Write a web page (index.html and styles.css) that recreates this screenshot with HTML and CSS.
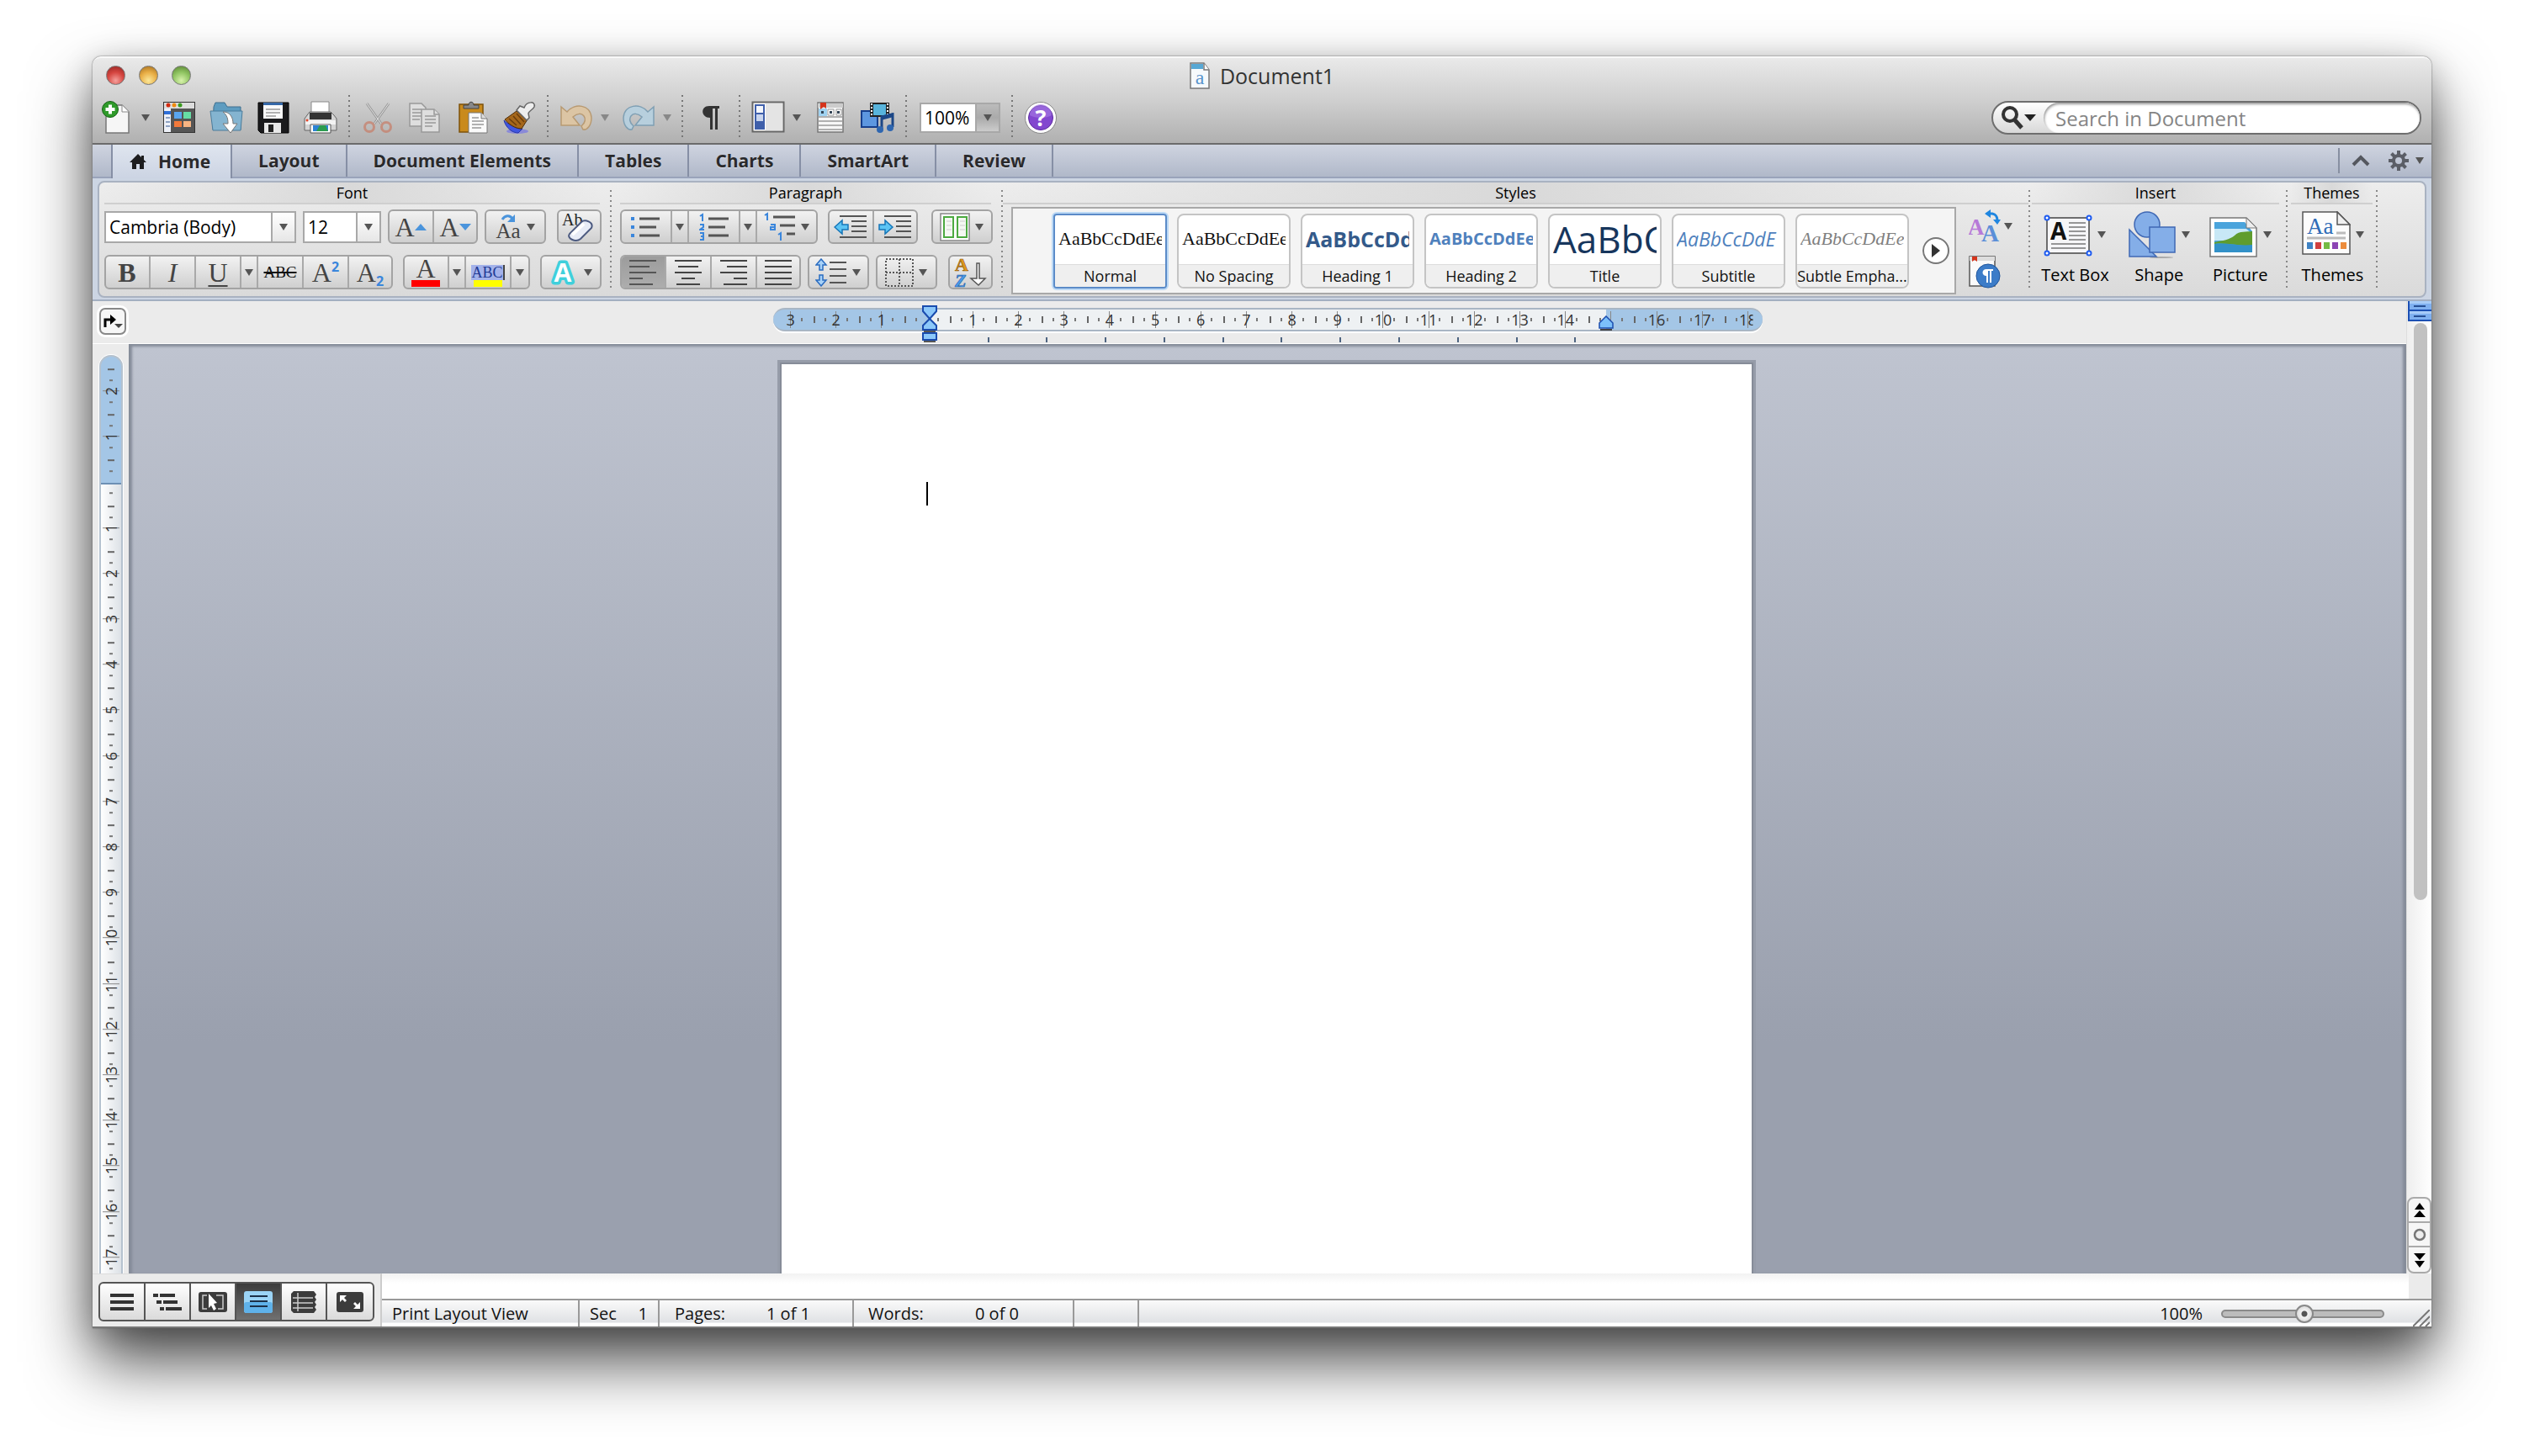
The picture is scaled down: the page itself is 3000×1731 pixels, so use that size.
FILE: index.html
```html
<!DOCTYPE html>
<html lang="en">
<head>
<meta charset="utf-8">
<title>Document1</title>
<link rel="stylesheet" href="styles.css">
</head>
<body>
<main class="window">
  <header class="chrome">
    <div class="titlebar">
      <div class="lights">
        <button class="light red" aria-label="Close"></button>
        <button class="light amber" aria-label="Minimize"></button>
        <button class="light green" aria-label="Zoom"></button>
      </div>
      <h1 class="title">
        <svg width="24" height="32" viewBox="0 0 24 32"><path d="M1 1h16l6 8v22H1z" fill="#f6fafc" stroke="#777" stroke-width="1.500"/><path d="M2 2h14v6H2z" fill="#58a8d4"/><path d="M17 1v8h6" fill="#fff" stroke="#777" stroke-width="1.500"/><text x="12" y="26" text-anchor="middle" font-size="24" font-family="Liberation Serif, serif" fill="#5a94cc">a</text></svg>
        Document1
      </h1>
    </div>
    <div class="toolbar">
      <button class="tool" aria-label="New"><svg width="40" height="40" viewBox="0 0 40 40"><path d="M7 5h19l8 8v25H7z" fill="#f6f6f6" stroke="#777" stroke-width="1.5"/><path d="M26 5v8h8" fill="#fff" stroke="#888"/><circle cx="12" cy="10" r="9.500" fill="#2f9a2a" stroke="#176316"/><path d="M12 4.500v11M6.500 10h11" stroke="#fff" stroke-width="4"/></svg></button>
      <button class="drop" aria-label="New options"><i class="tri"></i></button>
      <button class="tool" aria-label="Gallery"><svg width="40" height="40" viewBox="0 0 40 40"><rect x="1.500" y="1.500" width="37" height="36" fill="#555" stroke="#333"/><rect x="2" y="2" width="36" height="7" fill="#ddd"/><circle cx="7" cy="5" r="2.500" fill="#d22c12"/><circle cx="14" cy="5" r="2.500" fill="#ef8a10"/><circle cx="21" cy="5" r="2.500" fill="#3a9a1e"/><rect x="2" y="9" width="8" height="28" fill="#eef1f8"/><rect x="2" y="12" width="8" height="4" fill="#2f6fd8"/><path d="M4 20h5M4 25h5M4 30h5" stroke="#8ea2c4" stroke-width="2"/><rect x="14" y="13" width="9" height="8" fill="#5aa6f0"/><rect x="25" y="13" width="9" height="8" fill="#66dca4"/><rect x="14" y="24" width="9" height="7" fill="#f2793a"/><rect x="25" y="24" width="9" height="7" fill="#f7b482"/></svg></button>
      <button class="tool" aria-label="Open"><svg width="40" height="40" viewBox="0 0 40 40"><path d="M5 7l2-5h11l3 5h16v27H4z" fill="#5e9cc0" stroke="#3f6f8e"/><path d="M1 12h38l-2 23H4z" fill="#84b4d0" stroke="#4b7c9b"/><path d="M16 13c8 0 12 6 12 14h5l-8 11-9-11h6c0-6-1-10-6-14z" fill="#fff" stroke="#777"/></svg></button>
      <button class="tool" aria-label="Save"><svg width="40" height="40" viewBox="0 0 40 40"><path d="M2 2h36v36H5l-3-3z" fill="#1b1b1d" stroke="#000"/><path d="M8 2h23v19H8z" fill="#fafafa"/><path d="M8 2h23v3H8z" fill="#3568a8"/><path d="M11 10h17M11 14h17M11 18h12" stroke="#999" stroke-width="1.500"/><path d="M9 26h20v12H9z" fill="#e8e8e8"/><path d="M14 28h6v9h-6z" fill="#222"/></svg></button>
      <button class="tool" aria-label="Print"><svg width="40" height="40" viewBox="0 0 40 40"><path d="M9 1h21v16H9z" fill="#fff" stroke="#888"/><path d="M4 17l3-4h25l4 4 3 4v14H1V21z" fill="#d4d4d4" stroke="#666"/><path d="M7 14h26v8H7z" fill="#333"/><path d="M2 23h36v5H2z" fill="#f3f3f3"/><path d="M8 28h24v10H8z" fill="#fff" stroke="#555"/><path d="M11 29h18v7H11z" fill="#2d82d4"/><path d="M19 29h7l3 7H15z" fill="#2c9c4e"/><circle cx="4" cy="23" r="1.500" fill="#e5452a"/></svg></button>
      <i class="sep"></i>
      <button class="tool" aria-label="Cut"><svg width="40" height="40" viewBox="0 0 40 40" fill="none" opacity=".7"><path d="M7 3l17 24M33 3L16 27" stroke="#888" stroke-width="3"/><path d="M7 3l17 24M33 3L16 27" stroke="#eee" stroke-width="1"/><circle cx="10" cy="31" r="5.500" stroke="#c87c66" stroke-width="3"/><circle cx="30" cy="31" r="5.500" stroke="#c87c66" stroke-width="3"/></svg></button>
      <button class="tool" aria-label="Copy"><svg width="40" height="40" viewBox="0 0 40 40" fill="#dedede" stroke="#999" stroke-width="1.500"><path d="M2 3h14l5 5v22H2z"/><path d="M5 10h11M5 14h11M5 18h11M5 22h9" /><path d="M16 10h15l6 6v21H16z"/><path d="M31 10v6h6M20 18h13M20 22h13M20 26h13M20 30h9"/></svg></button>
      <button class="tool" aria-label="Paste"><svg width="40" height="40" viewBox="0 0 40 40"><rect x="5" y="4" width="28" height="33" fill="#c98a1c" stroke="#7d520a" stroke-width="1.500"/><path d="M10 9V5h6c0-5 6-5 6 0h6v4z" fill="#888" stroke="#444"/><path d="M16 14h15l7 7v17H16z" fill="#fafafa" stroke="#777"/><path d="M31 14v7h7" fill="#ddd" stroke="#777"/><path d="M20 20h8M20 24h14M20 28h14M20 32h11" stroke="#999" stroke-width="1.500"/></svg></button>
      <button class="tool" aria-label="Format painter"><svg width="40" height="40" viewBox="0 0 40 40"><ellipse cx="18" cy="36" rx="13" ry="3" fill="#8a8ad8"/><path d="M2 23c4 4 15 11 22 10l-5 5c-7 0-15-6-17-15z" fill="#4056e0" stroke="#2a38a8"/><path d="M3 22l14-10 13 10-7 11C15 33 7 27 3 22z" fill="#a5671b" stroke="#4d2c06"/><path d="M8 21l9 8M13 18l9 10M17 15l9 10" stroke="#6b3d0b" stroke-width="1.500"/><path d="M17 11l4-5 5 2c3-8 14-8 12-1-1 3-7 5-7 8l1 5-3 3z" fill="#eee" stroke="#666" stroke-width="1.500"/></svg></button>
      <i class="sep"></i>
      <button class="tool" aria-label="Undo"><svg width="40" height="40" viewBox="0 0 40 40"><path d="M2 7l7 6C18 2 37 4 38 20c0 9-5 15-10 14l-2-4c10-8 1-21-10-11l8 10H2z" fill="#dcc5a4" stroke="#b89a72" stroke-width="1.500"/></svg></button>
      <button class="drop" aria-label="Undo history"><i class="tri dim"></i></button>
      <button class="tool" aria-label="Redo"><svg width="40" height="40" viewBox="0 0 40 40"><path d="M38 7l-7 6C22 2 3 4 2 20c0 9 5 15 10 14l2-4C4 22 13 9 24 19l-8 10h22z" fill="#b7cfdd" stroke="#7f9fb3" stroke-width="1.500"/></svg></button>
      <button class="drop" aria-label="Redo history"><i class="tri dim"></i></button>
      <i class="sep"></i>
      <button class="tool" aria-label="Show formatting"><svg width="40" height="40" viewBox="0 0 40 40" fill="#333"><path d="M30 6v3h-2v25h-3V9h-3v25h-3V20C8 20 7 6 18 6z"/></svg></button>
      <i class="sep"></i>
      <button class="tool" aria-label="Sidebar"><svg width="40" height="40" viewBox="0 0 40 40"><rect x="1.500" y="1.500" width="37" height="35" fill="#fff" stroke="#666" stroke-width="2"/><rect x="17" y="3" width="20" height="32" fill="#e4e4e4"/><rect x="4" y="4" width="12" height="30" fill="#3f5faa"/><rect x="6" y="6" width="8" height="8" fill="#f3f6fc"/><rect x="6" y="16" width="8" height="8" fill="#c9d5ee"/></svg></button>
      <button class="drop" aria-label="Sidebar options"><i class="tri"></i></button>
      <button class="tool" aria-label="Toolbox"><svg width="40" height="40" viewBox="0 0 40 40"><rect x="5" y="2" width="30" height="35" fill="#f7f7f7" stroke="#777" stroke-width="1.500"/><path d="M5 3h30v5H5z" fill="#ccc"/><rect x="6" y="9" width="10" height="9" fill="#9fd2f0"/><path d="M8 2h7v7l-3-2-4 3z" fill="#d5341c"/><path d="M17 10h7v7h-7zM27 10h6v7h-6z" fill="#fff" stroke="#999"/><path d="M19 12h3v3h-3zM28 12h3v3h-3zM9 12h3v3H9z" fill="#345"/><path d="M5 19h30M5 24h30M5 29h30M5 34h30" stroke="#999" stroke-width="1.500"/></svg></button>
      <button class="tool" aria-label="Media browser"><svg width="40" height="40" viewBox="0 0 40 40"><rect x="1" y="12" width="19" height="19" fill="#5d97e0" stroke="#173f8c" stroke-width="2"/><rect x="11" y="2" width="23" height="17" fill="#222"/><rect x="15" y="4" width="15" height="13" fill="#58b4dc"/><path d="M13 3v15M32 3v15" stroke="#fff" stroke-width="2" stroke-dasharray="2 2"/><path d="M25 33V19l13-3v15" fill="none" stroke="#1c4786" stroke-width="3"/><path d="M24 18l15-4v5l-15 4z" fill="#1c4786"/><circle cx="23" cy="34" r="4" fill="#2e66b0"/><circle cx="35" cy="32" r="4" fill="#2e66b0"/></svg></button>
      <i class="sep"></i>
      <span class="combo zoom"><select aria-label="Zoom"><option>100%</option></select><span class="combo-arrow grey"><i class="tri"></i></span></span>
      <i class="sep"></i>
      <button class="tool" aria-label="Help"><svg width="40" height="40" viewBox="0 0 40 40"><circle cx="20" cy="20" r="18.500" fill="#fff" stroke="#888"/><circle cx="20" cy="20" r="14.500" fill="#8247cf" stroke="#5b2a9e"/><path d="M7 17a13 13 0 0 1 26 0c-6 4-20 4-26 0z" fill="#a67be4" opacity=".6"/><text x="20" y="30" text-anchor="middle" font-size="27" font-weight="bold" font-family="Open Sans, sans-serif" fill="#fff">?</text></svg></button>
      <label class="search">
        <span class="search-icon"><svg width="28" height="30" viewBox="0 0 28 30" fill="none" stroke="#333"><circle cx="11" cy="11" r="8" stroke-width="4"/><path d="M17 18l8 9" stroke-width="5"/></svg><i class="tri dark"></i></span>
        <input type="search" placeholder="Search in Document" aria-label="Search in Document">
      </label>
    </div>
  </header>

  <nav class="tabs">
    <a class="tab active" href="#"><svg width="20" height="18" viewBox="0 0 20 18"><path d="M10 0L0 10h3v8h5v-6h4v6h5v-8h3l-3-3V2h-3v2z" fill="#1d1d1f"/></svg>Home</a>
    <a class="tab" href="#">Layout</a>
    <a class="tab" href="#">Document Elements</a>
    <a class="tab" href="#">Tables</a>
    <a class="tab" href="#">Charts</a>
    <a class="tab" href="#">SmartArt</a>
    <a class="tab" href="#">Review</a>
    <div class="tab-tools">
      <button aria-label="Collapse ribbon"><svg width="22" height="14" viewBox="0 0 22 14"><path d="M2 12l9-9 9 9" fill="none" stroke="#55585f" stroke-width="4"/></svg></button>
      <button aria-label="Ribbon settings"><svg width="24" height="24" viewBox="0 0 24 24" fill="none" stroke="#5b5e66"><circle cx="12" cy="12" r="6" stroke-width="4"/><path d="M12 0v5M12 19v5M0 12h5M19 12h5M3.500 3.500l3.500 3.500M17 17l3.500 3.500M3.500 20.500L7 17M17 7l3.500-3.500" stroke-width="4"/></svg><i class="tri"></i></button>
    </div>
  </nav>

  <section class="ribbon">
    <div class="panel">
      <div class="group font-group">
        <h2>Font</h2>
        <div class="row">
          <span class="combo family"><select aria-label="Font"><option>Cambria (Body)</option></select><span class="combo-arrow"><i class="tri"></i></span></span>
          <span class="combo size"><select aria-label="Font size"><option>12</option></select><span class="combo-arrow"><i class="tri"></i></span></span>
          <div class="set"><button class="w54 serif">A<i class="tri up blue"></i></button><button class="w54 serif">A<i class="tri blue"></i></button></div>
          <div class="set"><button class="w72 case" aria-label="Change case"><svg width="32" height="36" viewBox="0 0 32 36"><path d="M9 9c3-5 9-6 12-1" fill="none" stroke="#4a94dc" stroke-width="3"/><path d="M24 3v9h-9z" fill="#4a94dc"/><text x="16" y="31" text-anchor="middle" font-size="25" font-family="Liberation Serif, serif" fill="#444">Aa</text></svg><i class="tri"></i></button></div>
          <div class="set last"><button class="w54" aria-label="Clear formatting"><svg width="40" height="38" viewBox="0 0 40 38"><text x="0" y="17" font-size="20" font-family="Liberation Serif, serif" fill="#222">Ab</text><path d="M9 27l14-14c4-4 15 0 12 7L22 33c-6 5-17-1-13-6z" fill="#e8ecf6" stroke="#4c5a80" stroke-width="2"/><path d="M12 28l14-13" stroke="#fff" stroke-width="4"/></svg></button></div>
        </div>
        <div class="row">
          <div class="set">
            <button class="w54 serif bold">B</button><button class="w54 serif ital">I</button><button class="w54 serif under">U</button><button class="w20" aria-label="Underline style"><i class="tri"></i></button><button class="w54 strike">ABC</button><button class="w54 serif">A<sup>2</sup></button><button class="w54 serif">A<sub>2</sub></button>
          </div>
          <div class="set mid">
            <button class="w54 ink">A</button><button class="w20" aria-label="Font color"><i class="tri"></i></button><button class="w54 mark"><span>ABC</span></button><button class="w20" aria-label="Highlight color"><i class="tri"></i></button>
          </div>
          <div class="set last"><button class="w72" aria-label="Text effects"><svg width="36" height="36" viewBox="0 0 36 36"><text x="17" y="29" text-anchor="middle" font-size="31" font-weight="bold" font-family="Liberation Sans, sans-serif" fill="#fff" stroke="#3fd0dc" stroke-width="7" stroke-linejoin="round" paint-order="stroke">A</text></svg><i class="tri"></i></button></div>
        </div>
      </div>

      <div class="group para-group">
        <h2>Paragraph</h2>
        <div class="row">
          <div class="set">
            <button class="w62" aria-label="Bullets"><svg width="36" height="32" viewBox="0 0 36 32"><path d="M0 6h4M0 16h4M0 26h4" stroke="#3a86dc" stroke-width="4"/><path d="M10 6h24M10 16h20M10 26h24" stroke="#555" stroke-width="3"/></svg></button><button class="w20" aria-label="Bullet style"><i class="tri"></i></button>
            <button class="w62" aria-label="Numbering"><svg width="36" height="36" viewBox="0 0 36 36"><path d="M1 5l3-2v8M1 15h4v3l-4 3h5M1 25h4v8H1M2 29h3" fill="none" stroke="#3a86dc" stroke-width="2"/><path d="M11 8h24M11 18h20M11 28h24" stroke="#555" stroke-width="3"/></svg></button><button class="w20" aria-label="Number style"><i class="tri"></i></button>
            <button class="w72" aria-label="Multilevel list"><svg width="38" height="36" viewBox="0 0 38 36"><path d="M1 4l3-2v8M8 15h5v6H8v-3h5M17 27l3-2v9" fill="none" stroke="#3a86dc" stroke-width="2"/><path d="M11 6h26M19 16h18M27 26h10" stroke="#555" stroke-width="3"/></svg><i class="tri"></i></button>
          </div>
          <div class="set mid">
            <button class="w54" aria-label="Decrease indent"><svg width="40" height="32" viewBox="0 0 40 32"><path d="M7 3h32M21 9h18M21 15h18M21 21h18M7 28h32" stroke="#555" stroke-width="2"/><path d="M1 16l9-8v5h7v6h-7v5z" fill="#5cc4f4" stroke="#1676b8" stroke-width="1.500"/></svg></button><button class="w54" aria-label="Increase indent"><svg width="40" height="32" viewBox="0 0 40 32"><path d="M7 3h32M21 9h18M21 15h18M21 21h18M7 28h32" stroke="#555" stroke-width="2"/><path d="M17 16l-9-8v5H1v6h7v5z" fill="#5cc4f4" stroke="#1676b8" stroke-width="1.500"/></svg></button>
          </div>
          <div class="set last"><button class="w72" aria-label="Columns"><svg width="36" height="34" viewBox="0 0 36 34"><rect x="1" y="1" width="34" height="32" fill="#fff" stroke="#888" stroke-width="1.500"/><path d="M5 5h11v24H5zM21 5h11v24H21z" fill="#f4f8f2" stroke="#4caa40" stroke-width="2"/><path d="M8 10h6M8 15h6M8 20h6M24 10h6M24 15h6M24 20h6" stroke="#ccc"/></svg><i class="tri"></i></button></div>
        </div>
        <div class="row">
          <div class="set">
            <button class="w54 pressed" aria-label="Align left"><svg width="32" height="32" viewBox="0 0 32 32"><path d="M0 2h32M0 9h24M0 16h32M0 23h16M0 30h28" stroke="#555" stroke-width="2"/></svg></button><button class="w54" aria-label="Center"><svg width="32" height="32" viewBox="0 0 32 32"><path d="M0 2h32M4 9h24M0 16h32M8 23h16M2 30h28" stroke="#444" stroke-width="2"/></svg></button><button class="w54" aria-label="Align right"><svg width="32" height="32" viewBox="0 0 32 32"><path d="M0 2h32M8 9h24M0 16h32M16 23h16M4 30h28" stroke="#444" stroke-width="2"/></svg></button><button class="w54" aria-label="Justify"><svg width="32" height="32" viewBox="0 0 32 32"><path d="M0 2h32M0 9h32M0 16h32M0 23h32M0 30h32" stroke="#444" stroke-width="2"/></svg></button>
          </div>
          <div class="set"><button class="w72" aria-label="Line spacing"><svg width="38" height="34" viewBox="0 0 38 34"><path d="M7 1l6 7H9v6H5V8H1zM7 33l6-7H9v-6H5v6H1z" fill="#a8d2f8" stroke="#2a6cc0" stroke-width="1.500"/><path d="M17 5h20M17 13h20M17 21h20M17 29h20" stroke="#555" stroke-width="2"/></svg><i class="tri"></i></button></div>
          <div class="set"><button class="w72" aria-label="Borders"><svg width="34" height="34" viewBox="0 0 34 34"><path d="M1 1h32v32H1zM17 1v32M1 17h32" fill="none" stroke="#555" stroke-width="2" stroke-dasharray="2 2"/></svg><i class="tri"></i></button></div>
          <div class="set last"><button class="w54" aria-label="Sort"><svg width="40" height="38" viewBox="0 0 40 38"><g font-size="22" font-weight="bold" font-family="Liberation Serif, serif" stroke-width=".6"><text x="2" y="17" fill="#e09a1c" stroke="#8c5408">A</text><text x="2" y="36" font-style="italic" fill="#4a9ae8" stroke="#1a5aa8">Z</text></g><path d="M28 8h3v18h7l-8 8-9-8h7z" fill="#fff" stroke="#555" stroke-width="1.500"/></svg></button></div>
        </div>
      </div>

      <div class="group styles-group">
        <h2>Styles</h2>
        <div class="styles-body">
          <div class="gallery">
            <button class="card selected"><span class="preview s-normal">AaBbCcDdEe</span><span class="name">Normal</span></button>
            <button class="card"><span class="preview s-normal">AaBbCcDdEe</span><span class="name">No Spacing</span></button>
            <button class="card"><span class="preview s-h1">AaBbCcDdEe</span><span class="name">Heading 1</span></button>
            <button class="card"><span class="preview s-h2">AaBbCcDdEe</span><span class="name">Heading 2</span></button>
            <button class="card"><span class="preview s-title">AaBbC</span><span class="name">Title</span></button>
            <button class="card"><span class="preview s-sub">AaBbCcDdE</span><span class="name">Subtitle</span></button>
            <button class="card"><span class="preview s-subtle">AaBbCcDdEe</span><span class="name">Subtle Empha...</span></button>
            <button class="more" aria-label="More styles"><svg width="12" height="16" viewBox="0 0 12 16"><path d="M1 0l10 8L1 16z" fill="#333"/></svg></button>
          </div>
          <div class="style-tools">
            <button aria-label="Change styles"><svg width="38" height="40" viewBox="0 0 38 40"><g font-family="Liberation Serif, serif" font-weight="bold"><text x="-1" y="30" font-size="27" fill="#b77ad8">A</text><text x="15" y="38" font-size="29" fill="#5b8fd8">A</text></g><path d="M22 5h6c5 1 6 4 6 9" fill="none" stroke="#1f86e0" stroke-width="3"/><path d="M26 0v10l-7-5zM29 12h9l-4 6z" fill="#1f86e0"/></svg><i class="tri"></i></button>
            <button aria-label="Styles window"><svg width="38" height="40" viewBox="0 0 38 40"><path d="M1 2h30v35H1z" fill="#fafafa" stroke="#555" stroke-width="1.500"/><path d="M1 2h30v5H1z" fill="#ddd"/><path d="M4 2h6v6l-3-2-3 2z" fill="#d5341c"/><circle cx="23" cy="25" r="14" fill="#3c7cc8" stroke="#1f559c"/><path d="M29 17v2h-2v14h-2V19h-2v14h-2v-8c-6 0-6-8 0-8z" fill="#fff"/></svg></button>
          </div>
        </div>
      </div>

      <div class="group insert-group">
        <h2>Insert</h2>
        <div class="bigs">
          <button class="big"><span class="pic"><svg width="58" height="56" viewBox="0 0 58 56"><rect x="4" y="8" width="50" height="42" fill="#f6f6f8" stroke="#444" stroke-width="1.500"/><text x="8" y="34" font-size="28" font-weight="bold" font-family="Open Sans, sans-serif" fill="#111">A</text><path d="M30 14h20M30 19h20M30 24h20M30 29h20M30 34h20M9 39h41M9 44h41" stroke="#777" stroke-width="1.500"/><g fill="#fff" stroke="#1f5cf0" stroke-width="2"><circle cx="4" cy="8" r="2.500"/><circle cx="54" cy="8" r="2.500"/><circle cx="4" cy="50" r="2.500"/><circle cx="54" cy="50" r="2.500"/></g></svg><i class="tri"></i></span>Text Box</button>
          <button class="big"><span class="pic"><svg width="58" height="56" viewBox="0 0 58 56" fill="#84aee8" stroke="#3f68b4" stroke-width="1.500"><ellipse cx="40" cy="55" rx="14" ry="1" fill="#aaa" stroke="none"/><circle cx="23" cy="16" r="15"/><path d="M2 22v32h32z"/><path d="M26 19h30v30H26z"/></svg><i class="tri"></i></span>Shape</button>
          <button class="big"><span class="pic"><svg width="58" height="56" viewBox="0 0 58 56"><path d="M1 8h43l12 12v34H1z" fill="#fff" stroke="#777" stroke-width="1.500"/><path d="M6 13h36l9 11v25H6z" fill="#4aa4dc"/><path d="M6 21h38l7 6v8H6z" fill="#c8e8f6"/><path d="M6 37c10-2 18-3 24-8 6-6 14-4 21-5v17c-14 1-30-4-45-2z" fill="#5f9c2e"/><path d="M6 39c16-2 29 3 45 1v9H6z" fill="#3291c8"/><path d="M44 8v12h12z" fill="#eee" stroke="#777"/></svg><i class="tri"></i></span>Picture</button>
        </div>
      </div>

      <div class="group themes-group">
        <h2>Themes</h2>
        <div class="bigs">
          <button class="big"><span class="pic"><svg width="58" height="56" viewBox="0 0 58 56"><path d="M1 1h41l15 15v35H1z" fill="#fcfcfc" stroke="#555" stroke-width="1.500"/><path d="M42 1v15h15z" fill="#f0f0f0" stroke="#555" stroke-width="1.500"/><text x="6" y="27" font-size="27" font-family="Liberation Serif, serif" fill="#2f6cb8">Aa</text><path d="M41 26h11M6 32h46" stroke="#bbb" stroke-width="3"/><path d="M6 37h7v8H6z" fill="#3f82c4"/><path d="M16 37h7v8h-7z" fill="#d03f3f"/><path d="M26 37h7v8h-7z" fill="#74bb44"/><path d="M36 37h7v8h-7z" fill="#8c44b4"/><path d="M46 37h7v8h-7z" fill="#ec8c3c"/></svg><i class="tri"></i></span>Themes</button>
        </div>
      </div>
    </div>
  </section>

  <section class="editor">
    <div class="hbar">
      <button class="tabstop" aria-label="Tab stop"><svg width="28" height="24" viewBox="0 0 28 24"><path d="M5 19V10h7" fill="none" stroke="#000" stroke-width="3"/><path d="M11 4l7 6-7 6z"/><path d="M16 15h10l-5 5z" fill="#444"/></svg></button>
      <div class="hruler">
        <div class="hscale">
          <ol><li>3</li><li>2</li><li>1</li><li class="zero"></li><li>1</li><li>2</li><li>3</li><li>4</li><li>5</li><li>6</li><li>7</li><li>8</li><li>9</li><li>10</li><li>11</li><li>12</li><li>13</li><li>14</li><li></li><li>16</li><li>17</li><li>18</li></ol>
        </div>
        <svg class="indent-left" width="18" height="44" viewBox="0 0 18 44" fill="#8cc8fa" stroke="#1a4cae" stroke-width="2"><path d="M1 1h16v6l-8 9-8-9z"/><path d="M9 16l8 8v5H1v-5z"/><path d="M1 33h16v8H1z"/><path d="M2 31h14M2 43h14" stroke="#555"/></svg>
        <svg class="indent-right" width="18" height="18" viewBox="0 0 18 18" fill="#7cc0fa" stroke="#1a4cae" stroke-width="1.500"><path d="M9 1l8 8v6H1V9z"/><path d="M2 17h14" stroke="#444" stroke-width="2"/></svg>
        <div class="stops"><i></i><i></i><i></i><i></i><i></i><i></i><i></i><i></i><i></i><i></i><i></i></div>
      </div>
    </div>
    <div class="vbar">
      <div class="vruler">
        <ol><li>2</li><li>1</li><li class="zero"></li><li>1</li><li>2</li><li>3</li><li>4</li><li>5</li><li>6</li><li>7</li><li>8</li><li>9</li><li>10</li><li>11</li><li>12</li><li>13</li><li>14</li><li>15</li><li>16</li><li>17</li></ol>
      </div>
    </div>
    <div class="workspace">
      <article class="page"><i class="caret"></i></article>
    </div>
    <aside class="scroll">
      <button class="split" aria-label="Split window"><svg width="28" height="24" viewBox="0 0 28 24"><path d="M0 0h28v24H0z" fill="#7fb0f0"/><path d="M0 0h28v3H0zM0 12h28v3H0z" fill="#a8ccf8"/><path d="M1 0v24M0 11h28M0 23h28" stroke="#1c50b4" stroke-width="2"/><path d="M7 6h14M7 18h14" stroke="#274f94" stroke-width="2"/></svg></button>
      <div class="track"><i class="thumb"></i></div>
      <div class="browse">
        <button aria-label="Previous page"><svg width="14" height="18" viewBox="0 0 14 18"><path d="M7 0l6 8H1zM7 9l7 8H0z"/></svg></button>
        <button aria-label="Select browse object"><svg width="16" height="16" viewBox="0 0 16 16"><circle cx="8" cy="8" r="6" fill="#eee" stroke="#777" stroke-width="2.500"/></svg></button>
        <button aria-label="Next page"><svg width="14" height="18" viewBox="0 0 14 18"><path d="M7 18l6-8H1zM7 9l7-8H0z"/></svg></button>
      </div>
    </aside>
  </section>

  <footer class="bottom">
    <div class="views">
      <div class="view-set">
        <button aria-label="Draft view"><svg width="28" height="22" viewBox="0 0 28 22"><path d="M0 3h28M0 11h28M0 19h28" stroke="#333" stroke-width="4"/></svg></button>
        <button aria-label="Outline view"><svg width="34" height="22" viewBox="0 0 34 22"><path d="M0 3h6M8 3h18M4 11h6M12 11h17M8 19h5M15 19h19" stroke="#333" stroke-width="4"/></svg></button>
        <button aria-label="Publishing layout view"><svg width="34" height="24" viewBox="0 0 34 24"><rect width="34" height="24" rx="3" fill="#3c3c3c"/><path d="M10 4H5v16h5M21 4h8v16h-6" fill="none" stroke="#ccc" stroke-width="1.500"/><path d="M12 2l10 11-4 1 3 6-3 2-3-6-3 3z" fill="#fff"/></svg></button>
        <button class="on" aria-label="Print layout view"><svg width="34" height="26" viewBox="0 0 34 26"><rect width="34" height="26" rx="3" fill="#9bd4f6"/><rect y="13" width="34" height="13" rx="3" fill="#5fb2ea"/><path d="M7 6h21M7 12h21M7 18h21" stroke="#1c3048" stroke-width="2"/></svg></button>
        <button aria-label="Notebook layout view"><svg width="30" height="26" viewBox="0 0 30 26"><path d="M3 0h24l3 4-2 3 2 3-2 3 2 3-2 3 2 3-3 4H3L0 23V3z" fill="#3c3c3c"/><path d="M8 2v22M2 8h24M2 14h24M2 20h24" stroke="#ccc" stroke-width="1.500"/></svg></button>
        <button aria-label="Full screen view"><svg width="32" height="24" viewBox="0 0 32 24"><rect width="32" height="24" rx="3" fill="#3c3c3c"/><path d="M4 4h8l-3 3 3 3-2 2-3-3-3 3zM28 20h-8l3-3-3-3 2-2 3 3 3-3z" fill="#fff"/></svg></button>
      </div>
    </div>
    <div class="lower">
      <div class="hscroll"></div>
      <div class="status">
        <span class="cell c-view">Print Layout View</span>
        <span class="cell c-sec"><span>Sec</span><span>1</span></span>
        <span class="cell c-pages"><span>Pages:</span><span>1 of 1</span></span>
        <span class="cell c-words"><span>Words:</span><span>0 of 0</span></span>
        <span class="cell c-blank"></span>
        <label class="zoomer"><span>100%</span><input type="range" min="0" max="100" value="51"></label>
        <svg class="grip" width="20" height="20" viewBox="0 0 20 20"><path d="M0 20L20 0M8 20L20 8M15 20l5-5" stroke="#777" stroke-width="2"/></svg>
      </div>
    </div>
  </footer>
</main>
</body>
</html>
```
FILE: styles.css
```css
* { box-sizing: border-box; }
body {
  margin: 0;
  height: 100vh;
  padding: 67px 110px 152px;
  display: flex;
  background: #fff;
  color: #111;
  font: 20px/24px "Open Sans", "Noto Sans", sans-serif;
}
button, select, input { font: inherit; color: inherit; margin: 0; padding: 0; border: 0; background: none; }
button { display: flex; align-items: center; justify-content: center; }
svg { display: block; flex: none; }
h1, h2, ol { margin: 0; padding: 0; font-weight: normal; list-style: none; }
a { color: inherit; text-decoration: none; }

.tri { flex: none; width: 0; height: 0; border: 5px solid transparent; border-top: 8px solid #555; border-bottom: 0; }
.tri.dim { border-top-color: #888; }
.tri.dark { border-top-color: #222; border-left-width: 7px; border-right-width: 7px; }
.tri.blue { border-top-color: #4a94dc; border-left-width: 7px; border-right-width: 7px; }
.tri.up { border-top: 0; border-bottom: 8px solid #4a94dc; }

.window {
  flex: 1;
  min-width: 0;
  display: flex;
  flex-direction: column;
  overflow: clip;
  border-radius: 10px 10px 0 0;
  background: #ebebeb;
  box-shadow: 0 0 2px #555, 0 40px 76px rgba(0, 0, 0, .7), 0 8px 36px rgba(0, 0, 0, .2);
}

/* title bar and toolbar */
.chrome {
  height: 105px;
  background: linear-gradient(#e9e9e9, #cfcfcf 50%, #b0b0b0);
  border-top: 2px solid #f8f8f8;
  border-bottom: 2px solid #6b6b6b;
  border-radius: 10px 10px 0 0;
}
.titlebar { height: 41px; display: grid; grid-template-columns: 1fr auto 1fr; align-items: center; padding: 0 16px; }
.lights { display: flex; gap: 16px; }
.light { width: 23px; height: 23px; border-radius: 50%; border: 1px solid #777; }
.red { background: radial-gradient(circle at 50% 80%, #f5a09c, #d5453f 50%, #8e2220); }
.amber { background: radial-gradient(circle at 50% 80%, #fbe89a, #e9ae45 50%, #a06a1c); }
.green { background: radial-gradient(circle at 50% 80%, #d8f2ac, #90c562 50%, #55802f); }
.title { display: flex; align-items: center; gap: 12px; font-size: 25px; color: #333; }
.toolbar { height: 60px; display: flex; align-items: center; padding: 0 12px 0 1px; }
.tool { width: 56px; height: 56px; }
.drop { width: 18px; height: 40px; padding-right: 6px; }
.sep { width: 12px; height: 54px; background: linear-gradient(#777 2px, transparent 2px) 50% 0 / 2px 6px repeat-y; }
.combo { display: flex; height: 38px; border: 2px solid #a8a8a8; background: #fff; }
.combo select { flex: 1; min-width: 0; appearance: none; padding: 0 4px; font-size: 21px; color: #000; }
.combo-arrow { width: 28px; display: flex; align-items: center; justify-content: center; border-left: 2px solid #a8a8a8; background: linear-gradient(#fff, #e6e6e6); }
.combo-arrow.grey { background: linear-gradient(#bbb, #aaa 50%, #ccc); }
.zoom { width: 96px; height: 36px; margin: 0 8px 0 10px; }
.search {
  margin-left: auto;
  width: 511px;
  height: 40px;
  display: flex;
  border: 2px solid #6e6e6e;
  border-radius: 20px;
  background: linear-gradient(#fff, #d8d8d8);
}
.search-icon { width: 60px; display: flex; align-items: center; justify-content: center; }
.search input { flex: 1; min-width: 0; padding: 0 14px; border-radius: 20px; background: #fff; box-shadow: inset 1px 2px 3px #999; font-size: 24px; outline: 0; }
.search input::placeholder { color: #858585; opacity: 1; }

/* ribbon tabs */
.tabs { height: 40px; display: flex; padding-left: 22px; background: linear-gradient(#cfd4e0, #b0b8c9); border-bottom: 2px solid #99a3ba; font-weight: bold; font-size: 21px; }
.tab { display: flex; align-items: center; gap: 14px; padding: 0 31px; border-right: 2px solid #868fa5; color: #2a2a2c; text-shadow: 0 1px 0 #e2e6ee; }
.tab.active { margin-bottom: -2px; padding: 0 24px 0 20px; border-left: 2px solid #868fa5; background: linear-gradient(#dfe5ef, #ccd4e3); }
.tab-tools { margin: 4px 9px 4px auto; display: flex; border-left: 2px solid #878fa1; }
.tab-tools button { padding-left: 14px; gap: 8px; }
.tab-tools button + button { padding-left: 22px; }

/* ribbon */
.ribbon { padding: 3px 6px 2px; background: #ccd5e3; border-bottom: 2px solid #a3afc1; }
.panel { height: 139px; display: flex; border: 2px solid #a9b2c1; border-radius: 8px; background: linear-gradient(#ededed, #dadada); }
.group { margin: 9px 0 6px; padding: 0 12px 0 8px; background: linear-gradient(#888 2px, transparent 2px) 100% 0 / 2px 6px repeat-y; }
.group h2 { height: 26px; margin: -9px 2px 6px 0; text-align: center; font-size: 18px; line-height: 24px; color: #000; border-bottom: 2px solid #cfcfcf; background: linear-gradient(90deg, transparent, #d9d9d9 50%, transparent); }
.row { display: flex; height: 41px; align-items: center; gap: 8px; margin-bottom: 13px; }
.font-group { width: 609px; padding-left: 6px; }
.para-group { width: 465px; padding-left: 10px; }
.family { width: 228px; }
.size { width: 93px; }
.set { display: flex; height: 41px; border: 2px solid #a3a3a3; border-radius: 6px; background: linear-gradient(#f2f2f2, #cfcfcf); overflow: hidden; }
.set button { height: 37px; border-right: 2px solid #a9a9a9; gap: 6px; }
.set button:first-child { margin-left: -1px; }
.set button:last-child { border-right: 0; }
.last { margin-left: auto; }
.mid { margin-left: 4px; }
.w54 { width: 54px; }
.set .w54:last-child { width: 50px; }
.w20 { width: 20px; }
.w62 { width: 61px; }
.w72 { width: 70px; }
.set .serif { font: 32px/36px "Liberation Serif", serif; color: #444; gap: 0; }
.set .bold { font-weight: bold; }
.set .ital { font-style: italic; }
.set .under { text-decoration: underline; text-decoration-thickness: 2px; text-underline-offset: 4px; }
.strike { font: 19px/24px "Liberation Serif", serif; text-decoration: line-through; text-decoration-thickness: 2px; }
.serif sup, .serif sub { font: bold 16px/16px "Open Sans", sans-serif; color: #3a86dc; }
.serif sup { align-self: flex-start; margin-top: 4px; }
.serif sub { align-self: flex-end; }
.set .ink { font: 32px/28px "Liberation Serif", serif; color: #444; background: linear-gradient(#f00, #f00) 50% 28px / 34px 8px no-repeat; align-items: flex-start; }
.set .mark { font: 18px/18px "Liberation Serif", serif; color: #223a94; background: linear-gradient(#ff0, #ff0) 50% 28px / 34px 8px no-repeat; align-items: flex-start; padding-top: 10px; }
.mark span { background: #a3b2ea; border-right: 2px solid #444; }
.pressed { background: linear-gradient(#9c9c9c, #adadad); }

.styles-group { flex: 1; min-width: 0; padding: 0; }
.styles-group h2 { margin-bottom: 3px; }
.styles-body { display: flex; padding-left: 10px; }
.gallery { flex: 1; min-width: 0; height: 104px; display: flex; align-items: center; justify-content: flex-end; gap: 12px; padding: 0 6px; border: 2px solid #a8a8a8; background: #f4f4f4; }
.card { width: 135px; height: 89px; flex-direction: column; justify-content: flex-start; align-items: stretch; border: 2px solid #c4c4c4; border-radius: 8px; background: #fff; overflow: hidden; }
.card.selected { border-color: #5b8bc8; border-radius: 4px; box-shadow: 0 0 0 2px #bcd9f5; }
.preview { height: 58px; margin: 0 4px; overflow: hidden; white-space: nowrap; text-align: left; line-height: 56px; }
.name { flex: 1; font-size: 18px; line-height: 26px; text-align: center; white-space: nowrap; background: #efefef; border-top: 1px solid #ddd; }
.s-normal { font-family: "Liberation Serif", serif; font-size: 22px; }
.s-h1 { font-size: 25px; font-weight: bold; color: #345a8a; }
.s-h2 { font-size: 20px; font-weight: bold; color: #4f81bd; }
.s-title { font-size: 44px; color: #17365d; }
.s-sub { font-size: 23px; font-style: italic; color: #4f81bd; }
.s-subtle { font-family: "Liberation Serif", serif; font-size: 22px; font-style: italic; color: #808080; }
.more { width: 32px; height: 32px; margin-left: 4px; border: 2px solid #777; border-radius: 50%; background: #fff; }
.style-tools { width: 88px; padding: 3px 0 0 15px; display: flex; flex-direction: column; gap: 14px; }
.style-tools button { justify-content: flex-start; gap: 4px; height: 40px; }

.insert-group { width: 306px; padding: 0 8px 0 2px; }
.themes-group { width: 107px; margin-right: 56px; padding: 0 4px; }
.group:nth-child(n + 4) h2 { margin-bottom: 8px; }
.bigs { display: flex; justify-content: space-around; }
.big { flex-direction: column; gap: 8px; color: #000; }
.pic { display: flex; align-items: center; gap: 6px; }

/* rulers, page and scroll bar */
.editor { flex: 1; min-height: 0; display: grid; grid-template: 51px minmax(0, 1fr) / 43px minmax(0, 1fr) 30px; }
.hbar { grid-column: 1 / 3; display: grid; grid-template-columns: 43px 1fr; border-bottom: 1px solid #fff; }
.tabstop { width: 32px; height: 32px; margin: 8px 0 0 8px; border: 2px solid #888; border-radius: 7px; background: #f6f6f6; box-shadow: 0 0 0 3px #fff; }
.hruler { position: relative; width: 1176px; margin: 8px auto 0; }
.hscale { height: 28px; padding: 0 11px 0 15px; border: 2px solid #a9b6c4; border-width: 2px 0; border-radius: 14px; box-shadow: 0 2px 0 #fff; background: linear-gradient(90deg, #a4c6e6 186px, #eef1f3 186px 990px, #a4c6e6 990px); }
.hscale ol { height: 24px; display: grid; grid-template-columns: repeat(22, 1fr); width: 1192px; margin-left: -21px; clip-path: inset(0 21px 0 20px); }
.hscale li {
  text-align: center; font-size: 18px; line-height: 24px; color: #333;
  background:
    linear-gradient(#666, #666) 0 50% / 2px 8px no-repeat,
    linear-gradient(#777, #777) 25% 50% / 2px 4px no-repeat,
    linear-gradient(#777, #777) 75% 50% / 2px 4px no-repeat,
    linear-gradient(#888, #888) 50% 50% / 1px 20px no-repeat;
}
.indent-left { position: absolute; left: 177px; top: -3px; }
.indent-right { position: absolute; left: 981px; top: 9px; }
.stops { position: absolute; left: 255px; right: 221px; top: 35px; display: flex; justify-content: space-between; }
.stops i { width: 2px; height: 6px; background: #4e6480; }
.vbar { padding: 13px 7px 0 8px; overflow: hidden; }
.vruler { width: 28px; min-height: 100%; padding-top: 14px; border: 2px solid #b5c2cf; border-width: 2px 2px 0; border-radius: 14px 14px 0 0; box-shadow: 0 0 0 1px #fff; background: linear-gradient(#a4c6e6 150px, #6d90b4 150px 152px, transparent 152px), linear-gradient(90deg, #fff, #dce1e6); }
.vruler ol { height: 1084px; display: grid; grid-template-rows: repeat(20, 1fr); }
.vruler li {
  writing-mode: vertical-rl; transform: rotate(180deg); text-align: center; font-size: 18px; line-height: 24px; width: 24px; color: #333;
  background:
    linear-gradient(#666, #666) 50% 100% / 8px 2px no-repeat,
    linear-gradient(#777, #777) 50% 25% / 4px 2px no-repeat,
    linear-gradient(#777, #777) 50% 75% / 4px 2px no-repeat,
    linear-gradient(#888, #888) 50% 50% / 20px 1px no-repeat;
}
.hscale .zero { background-size: 2px 8px, 2px 4px, 2px 4px, 0 0; }
.vruler .zero { background-size: 8px 2px, 4px 2px, 4px 2px, 0 0; }
.workspace { grid-column: 2; padding: 24px 2px 0 0; overflow: hidden; background: linear-gradient(#bfc4d0, #9aa0ae 830px); box-shadow: inset 5px 4px 3px -1px #858c99, inset -5px 0 3px -1px #858c99; }
.page { width: 1153px; height: 1400px; margin: 0 auto; padding: 140px 172px; background: #fff; box-shadow: 0 0 0 2px #868c98, 0 0 0 5px #969ca9; }
.caret { display: block; width: 2px; height: 28px; background: #000; }
.scroll { grid-column: 3; grid-row: 1 / 3; display: flex; flex-direction: column; border-left: 1px solid #ddd; background: linear-gradient(90deg, #eee, #fff); }
.split { height: 24px; }
.track { flex: 1; padding-top: 2px; display: flex; justify-content: center; }
.thumb { width: 16px; height: 66%; margin-left: 2px; min-height: 40px; border-radius: 8px; background: #c1c1c1; }
.browse { border: 2px solid #aaa; border-radius: 8px; background: #f6f6f6; }
.browse button { width: 100%; height: 29px; border-bottom: 2px solid #aaa; }
.browse button:last-child { border: 0; }

/* bottom */
.bottom { height: 65px; display: flex; border-bottom: 2px solid #777; }
.views { width: 344px; padding: 9px 7px 0; border-right: 2px solid #ccc; border-top: 1px solid #ddd; }
.view-set { height: 47px; display: grid; grid-template-columns: repeat(6, 1fr); border: 2px solid #555; border-radius: 6px; background: linear-gradient(#fff, #dadada); overflow: hidden; }
.view-set button { border-right: 2px solid #555; }
.view-set button:last-child { border: 0; }
.view-set .on { background: linear-gradient(#3b3b3b, #707070); }
.lower { flex: 1; min-width: 0; display: flex; flex-direction: column; }
.hscroll { height: 30px; margin-right: 27px; background: linear-gradient(#f2f2f2, #fff 40%); }
.status { flex: 1; display: flex; align-items: stretch; border-top: 2px solid #999; background: linear-gradient(#fafafa, #dfe1e4 85%, #fff 86%); }
.cell { display: flex; align-items: center; justify-content: space-between; padding: 0 12px; border-right: 2px solid #999; white-space: nowrap; }
.c-view { width: 235px; }
.c-sec { width: 95px; }
.c-pages { width: 231px; padding: 0 50px 0 18px; }
.c-words { width: 262px; padding: 0 64px 0 17px; }
.c-blank { width: 77px; }
.zoomer { margin-left: auto; display: flex; align-items: center; gap: 22px; }
.zoomer input { width: 194px; height: 24px; appearance: none; }
.zoomer input::-webkit-slider-runnable-track { height: 10px; border: 2px solid #8a8a8a; border-radius: 5px; background: #bcbcbc; }
.zoomer input::-webkit-slider-thumb { appearance: none; width: 22px; height: 22px; margin-top: -8px; border: 2px solid #888; border-radius: 50%; background: radial-gradient(#555 3px, #f3f3f3 4px, #ccc); }
.grip { align-self: flex-end; margin-left: 34px; margin-right: 2px; }
```
